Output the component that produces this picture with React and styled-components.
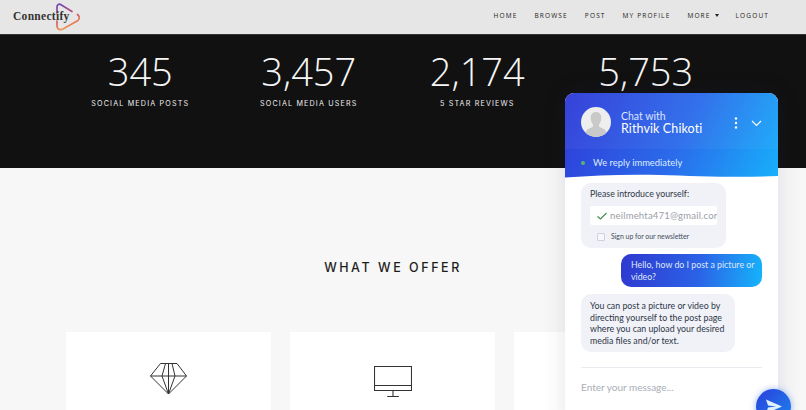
import React from "react";
import styled, { createGlobalStyle } from "styled-components";

const Global = createGlobalStyle`
  html, body { margin: 0; padding: 0; width: 806px; height: 410px; overflow: hidden; background: #f7f7f7; }
  * { box-sizing: border-box; }
  body { font-family: "Lato", "Open Sans", sans-serif; color: #222; }
`;
const Page = styled.div`position: relative; width: 806px; height: 410px; overflow: hidden;`;
const Nav = styled.nav`height: 35px; background: #e6e6e6; display: flex; justify-content: space-between; align-items: center; padding: 0 37px 3px 13px; border-bottom: 1px solid #333;`;
const Brand = styled.div`position: relative; display: flex; align-items: center; height: 30px;`;
const BrandName = styled.span`position: relative; z-index: 1; font: 700 11.5px "Liberation Serif", serif; letter-spacing: .3px; color: #333;`;
const BrandMark = styled.svg`position: absolute; left: 42px; top: 1px;`;
const NavList = styled.ul`display: flex; align-items: center; gap: 17px; list-style: none; margin: 0; padding: 0;`;
const NavItem = styled.li`font: 500 6.5px "Open Sans", sans-serif; letter-spacing: 1.15px; color: #222; white-space: nowrap; display: flex; align-items: center; gap: 4px;`;
const Caret = styled.i`width: 0; height: 0; border: 2.5px solid transparent; border-top: 3px solid #222; border-bottom: 0;`;
const Stats = styled.section`height: 133px; background: #111; padding: 14px 56px 0; display: grid; grid-template-columns: repeat(4, 168.5px); align-content: start;`;
const Stat = styled.div`text-align: center; color: #fff;`;
const StatValue = styled.div`font: 300 38px/44px "Open Sans", sans-serif; color: #f6f6f6;`;
const StatLabel = styled.div`margin-top: 5px; font: 400 7.2px/11px "Inter", sans-serif; letter-spacing: 1.15px; color: #eee;`;
const Offer = styled.section`padding-top: 92px; background: #f7f7f7;`;
const OfferTitle = styled.h2`margin: 0; text-align: center; padding-right: 20px; font: 500 12.5px/16px "Inter", sans-serif; letter-spacing: 2.55px; color: #1d1d1d;`;
const Cards = styled.div`margin: 56px 0 0 66px; display: grid; grid-template-columns: repeat(3, 205px); gap: 19px;`;
const Card = styled.article`height: 100px; background: #fff; display: flex; justify-content: center; padding-top: 31px;`;

const Chat = styled.aside`position: absolute; left: 565px; top: 93px; width: 213px; height: 340px; background: #fff; border-radius: 9px 9px 0 0; box-shadow: 0 0 24px rgba(40,50,110,.12);`;
const ChatHead = styled.header`height: 85px; position: relative; border-radius: 9px 9px 0 0; overflow: hidden; background: linear-gradient(115deg, #2f3ad8 0%, #2b6ceb 55%, #17b0fb 100%); color: #fff;`;
const HeadTop = styled.div`height: 56px; padding: 14px 14px 0 16px; display: flex; align-items: flex-start; background: rgba(255,255,255,.04);`;
const Avatar = styled.div`width: 30px; height: 30px; border-radius: 50%; background: #eee; overflow: hidden; flex: none;`;
const Who = styled.div`margin-left: 10px; flex: 1; padding-top: 3px;`;
const ChatWith = styled.div`font: 400 10.500px/12px "Lato", sans-serif; color: #dbe5ff;`;
const ChatName = styled.div`font: 400 12.500px/14px "Lato", sans-serif; letter-spacing: .1px;`;
const HeadIcons = styled.div`display: flex; align-items: center; gap: 13px; padding: 10px 2px 0 0;`;
const Status = styled.div`display: flex; align-items: center; padding: 8px 0 0 16px; font: 400 9.400px/12px "Lato", sans-serif; color: #dcebff;`;
const Dot = styled.i`width: 4px; height: 4px; border-radius: 50%; background: #57b56f; margin-right: 8px;`;
const Wave = styled.svg`position: absolute; left: 0; bottom: 0; display: block;`;
const Messages = styled.div`padding: 5px 16px 0; display: flex; flex-direction: column;`;
const Bubble = styled.div`width: ${p => p.$w}px; background: #f0f2f7; border-radius: 10px; padding: ${p => p.$pad || "5px 9px"}; font: 400 8.800px/11.600px "Lato", sans-serif; color: #2f3648;`;
const OutBubble = styled.div`align-self: flex-end; width: 141px; margin-top: 6px; border-radius: 10px; padding: 5px 5px 5px 10px; background: linear-gradient(100deg, #2f38cf, #2b62e6 55%, #15b5fb); color: #dfe7fc; font: 400 8.800px/11.600px "Lato", sans-serif;`;
const InBubble = styled(Bubble)`margin-top: 7px; padding: 6px 8px 5px 9px;`;
const FormLabel = styled.div`font: 400 8.800px/12px "Lato", sans-serif; color: #2f3648;`;
const Field = styled.div`margin-top: 6px; height: 19px; background: #fff; border-radius: 2px; display: flex; align-items: center; padding-left: 6px; overflow: hidden;`;
const FieldText = styled.span`margin-left: 2px; font: 400 9.500px "Lato", sans-serif; letter-spacing: .2px; color: #9a9ea8; white-space: nowrap;`;
const Check = styled.label`display: flex; align-items: center; margin: 7px 0 0 7px; font: 400 6.900px/9px "Lato", sans-serif; color: #454b5c;`;
const Box = styled.i`width: 8px; height: 8px; border: 1px solid #cfd2dc; border-radius: 1px; margin-right: 6px; background: #f6f7fa;`;
const Rule = styled.div`height: 1px; background: #e9ebf0; margin: 15px 16px 0;`;
const Composer = styled.div`padding: 12px 16px; font: 400 10px/14px "Lato", sans-serif; color: #a9adb8;`;
const Send = styled.button`position: absolute; left: 191px; top: 296px; width: 35px; height: 35px; padding: 0; border: 0; border-radius: 50%; background: linear-gradient(135deg, #2a3fdc, #1c86ee); box-shadow: 0 0 6px rgba(40,110,240,.5); display: flex; align-items: center; justify-content: center;`;
const SendIcon = styled.svg`margin-top: -1px;`;
const CheckIcon = styled.svg`flex: none;`;

const navItems = ["HOME", "BROWSE", "POST", "MY PROFILE"];
const stats = [["345", "SOCIAL MEDIA POSTS"], ["3,457", "SOCIAL MEDIA USERS"], ["2,174", "5 STAR REVIEWS"], ["5,753", "NEW FOLLOWERS"]];

const Diamond = () => (
  <svg width="38" height="34" viewBox="0 0 38 34" fill="none" stroke="#333" strokeWidth="1">
    <path d="M10.5 .5H27L36.500 13L18.500 31L.5 13Z" />
    <path d="M.5 13H36.500M15.500 .5L12 13L18.500 31L25 13L22 .5M18.500 .5V31" />
  </svg>
);
const Monitor = () => (
  <svg width="38" height="34" viewBox="0 0 38 34" fill="none" stroke="#333" strokeWidth="1.1">
    <path d="M.5 3.500H37.500V27.500H.5Z" /><path d="M.5 22.500H37.500M19 27.500V33.500M13.200 33.600H24.800" />
  </svg>
);

export default function App() {
  return (
    <Page>
      <Global />
      <Nav>
        <Brand>
          <BrandName>Connectify</BrandName>
          <BrandMark width="30" height="30" viewBox="0 0 30 30" fill="none" strokeWidth="1.700" strokeLinecap="round">
            <defs><linearGradient id="lg" x1="0" y1="0" x2=".3" y2="1"><stop offset="0" stopColor="#6a46b8" /><stop offset=".55" stopColor="#c9506f" /><stop offset="1" stopColor="#f29550" /></linearGradient></defs>
            <path stroke="url(#lg)" d="M2 11V5C2 2.500 4 1.500 6 2.700L17 9.500M22.500 12.500C24.500 14 25 16.500 23 18.500L8 27C5 28.500 2.500 27.500 2 24.500V19" />
          </BrandMark>
        </Brand>
        <NavList>
          {navItems.map(t => <NavItem key={t}>{t}</NavItem>)}
          <NavItem>MORE <Caret /></NavItem>
          <NavItem>LOGOUT</NavItem>
        </NavList>
      </Nav>
      <Stats>
        {stats.map(([v, l]) => <Stat key={v}><StatValue>{v}</StatValue><StatLabel>{l}</StatLabel></Stat>)}
      </Stats>
      <Offer>
        <OfferTitle>WHAT WE OFFER</OfferTitle>
        <Cards>
          <Card><Diamond /></Card>
          <Card><Monitor /></Card>
          <Card />
        </Cards>
      </Offer>
      <Chat>
        <ChatHead>
          <HeadTop>
            <Avatar>
              <svg width="30" height="30" viewBox="0 0 30 30"><path fill="#c9c9c9" d="M15 5c-3.600 0-5.500 2.500-5.300 6 .1 2.500 1 5 2.300 6.500v2c-2 1.500-5.500 2.300-7 4.500v6h20v-6c-1.500-2.200-5-3-7-4.500v-2c1.300-1.500 2.200-4 2.300-6.500.2-3.500-1.700-6-5.300-6z" /></svg>
            </Avatar>
            <Who><ChatWith>Chat with</ChatWith><ChatName>Rithvik Chikoti</ChatName></Who>
            <HeadIcons>
              <svg width="4" height="12" viewBox="0 0 4 12" fill="#fff"><circle cx="2" cy="1.500" r="1.200" /><circle cx="2" cy="6" r="1.200" /><circle cx="2" cy="10.500" r="1.200" /></svg>
              <svg width="11" height="7" viewBox="0 0 11 7" fill="none" stroke="#fff" strokeWidth="1.100"><path d="M1 1l4.500 4.500L10 1" /></svg>
            </HeadIcons>
          </HeadTop>
          <Status><Dot />We reply immediately</Status>
          <Wave width="213" height="5" viewBox="0 0 213 5" preserveAspectRatio="none"><path fill="#fff" d="M0 5V4.500C30 2.500 60 1 95 2C130 3 175 5 213 3V5Z" /></Wave>
        </ChatHead>
        <Messages>
          <Bubble $w={145} $pad="5px 9px 7px">
            <FormLabel>Please introduce yourself:</FormLabel>
            <Field>
              <CheckIcon width="12" height="10" viewBox="0 0 12 10" fill="none" stroke="#3f8f4f" strokeWidth="1.200"><path d="M1.500 5.500l3 2.500 6-6" /></CheckIcon>
              <FieldText>neilmehta471@gmail.cor</FieldText>
            </Field>
            <Check><Box />Sign up for our newsletter</Check>
          </Bubble>
          <OutBubble>Hello, how do I post a picture or video?</OutBubble>
          <InBubble $w={154}>You can post a picture or video by directing yourself to the post page where you can upload your desired media files and/or text.</InBubble>
        </Messages>
        <Rule />
        <Composer>Enter your message...</Composer>
        <Send aria-label="Send">
          <SendIcon width="18" height="15" viewBox="0 0 18 15" fill="#dff0ff"><path d="M1 0.500L17 7.500L1 14.500L3 8.500L11 7.500L3 6.500Z" /></SendIcon>
        </Send>
      </Chat>
    </Page>
  );
}
